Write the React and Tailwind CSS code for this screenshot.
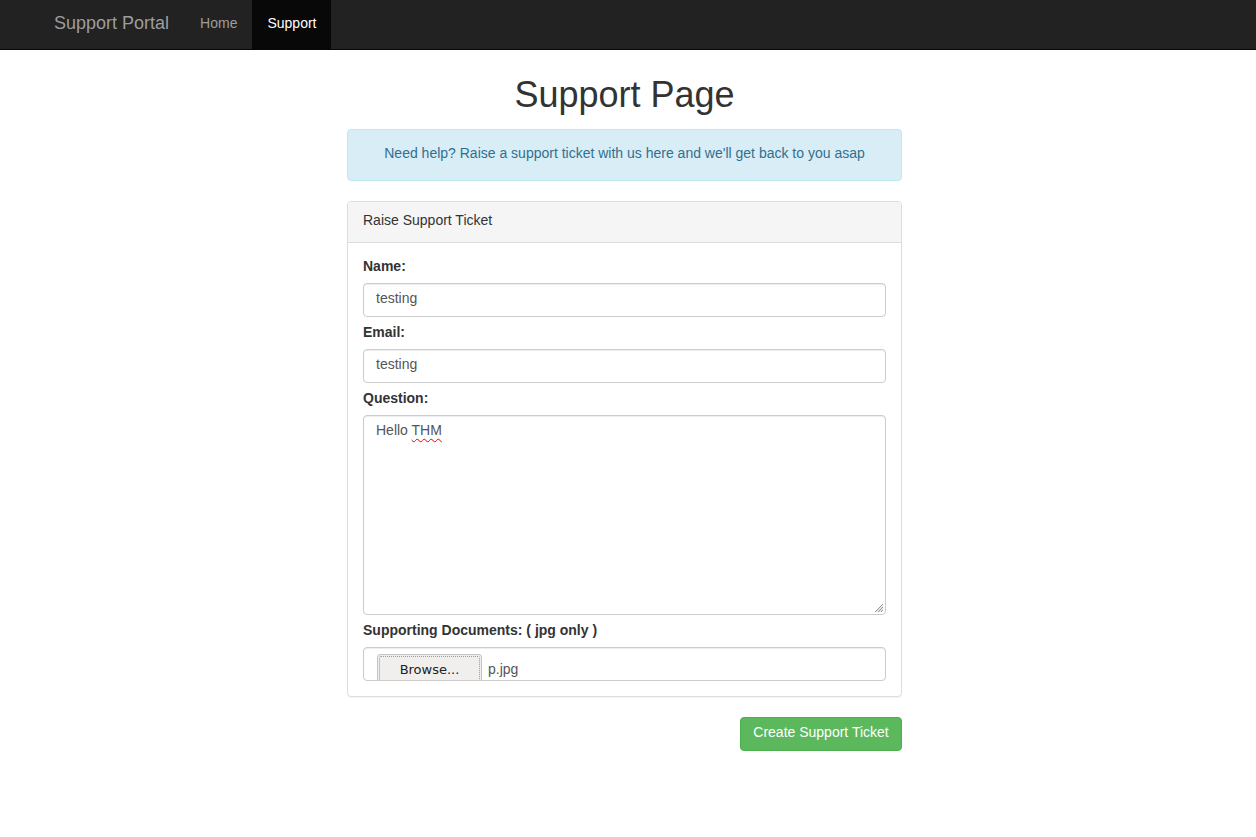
import React from "react";

const font = { fontFamily: '"Liberation Sans", Arial, Helvetica, sans-serif' };

function Label({ children, first }) {
  return (
    <div
      className={`text-[14px] leading-[20px] font-bold text-[#333] mb-[7px] ${first ? "" : "mt-[5px]"}`}
    >
      {children}
    </div>
  );
}

function Input({ value }) {
  return (
    <div className="h-[34px] border border-[#ccc] rounded-[4px] shadow-[inset_0_1px_1px_rgba(0,0,0,0.075)] px-[12px] pb-[4px] flex items-center text-[14px] text-[#555]">
      {value}
    </div>
  );
}

export default function App() {
  return (
    <div className="min-h-[837px] bg-white" style={font}>
      <nav className="h-[50px] bg-[#222] border-b border-[#080808] flex items-stretch pl-[39px]">
        <div className="pl-[15px] pr-[16px] pb-[2px] flex items-center text-[18px] text-[#9d9d9d]">Support Portal</div>
        <div className="flex items-stretch">
          <div className="px-[15px] pb-[2px] flex items-center text-[14px] text-[#9d9d9d]">Home</div>
          <div className="px-[15px] pb-[2px] w-[79px] flex items-center text-[14px] text-white bg-[#080808]">Support</div>
        </div>
      </nav>

      <div className="w-[555px] ml-[347px]">
        <h1 className="mt-[25px] mb-[14px] text-[36px] leading-[40px] text-[#333] text-center">
          Support Page
        </h1>

        <div className="h-[52px] bg-[#d9edf7] border border-[#bce8f1] rounded-[4px] pb-[3px] flex items-center justify-center text-[14px] text-[#31708f]">
          Need help? Raise a support ticket with us here and we'll get back to you asap
        </div>

        <div className="mt-[20px] border border-[#ddd] rounded-[4px] shadow-[0_1px_1px_rgba(0,0,0,0.05)]">
          <div className="h-[41px] bg-[#f5f5f5] border-b border-[#ddd] rounded-t-[3px] px-[15px] pb-[4px] flex items-center text-[14px] text-[#333]">
            Raise Support Ticket
          </div>
          <div className="px-[15px] pt-[13px] pb-[15px]">
            <Label first>Name:</Label>
            <Input value="testing" />
            <Label>Email:</Label>
            <Input value="testing" />
            <Label>Question:</Label>
            <div className="relative h-[200px] border border-[#ccc] rounded-[4px] shadow-[inset_0_1px_1px_rgba(0,0,0,0.075)] px-[12px] pt-[4px] text-[14px] leading-[20px] text-[#555]">
              Hello{" "}
              <span className="underline decoration-wavy decoration-[#e00] decoration-1 underline-offset-[3px]">
                THM
              </span>
              <svg
                className="absolute right-[1px] bottom-[1px]"
                width="10"
                height="10"
                viewBox="0 0 10 10"
              >
                <line x1="9" y1="1" x2="1" y2="9" stroke="#999" strokeWidth="1" />
                <line x1="9" y1="4" x2="4" y2="9" stroke="#999" strokeWidth="1" />
                <line x1="9" y1="7" x2="7" y2="9" stroke="#999" strokeWidth="1" />
                <line x1="9" y1="2.5" x2="2.5" y2="9" stroke="#ccc" strokeWidth="1" />
                <line x1="9" y1="5.5" x2="5.5" y2="9" stroke="#ccc" strokeWidth="1" />
              </svg>
            </div>
            <Label>Supporting Documents: ( jpg only )</Label>
            <div className="h-[34px] border border-[#ccc] rounded-[4px] shadow-[inset_0_1px_1px_rgba(0,0,0,0.075)] pl-[13px] flex items-baseline overflow-hidden">
              <div className="mt-[6px] w-[105px] h-[30px] shrink-0 bg-[#f0efee] border border-[#c4c4c4] rounded-[3px] p-[1px]">
                <div
                  className="h-full border border-dotted border-[#999] rounded-[2px] flex items-start justify-center pt-[3px] text-[13px] text-[#222]"
                  style={{ fontFamily: '"DejaVu Sans", "Noto Sans", sans-serif' }}
                >
                  Browse...
                </div>
              </div>
              <div className="ml-[6px] text-[14px] text-[#555]">p.jpg</div>
            </div>
          </div>
        </div>

        <div className="mt-[20px] flex justify-end">
          <div className="h-[34px] w-[162px] bg-[#5cb85c] border border-[#4cae4c] rounded-[4px] pb-[4px] flex items-center justify-center text-[14px] text-white">
            Create Support Ticket
          </div>
        </div>
      </div>
    </div>
  );
}
